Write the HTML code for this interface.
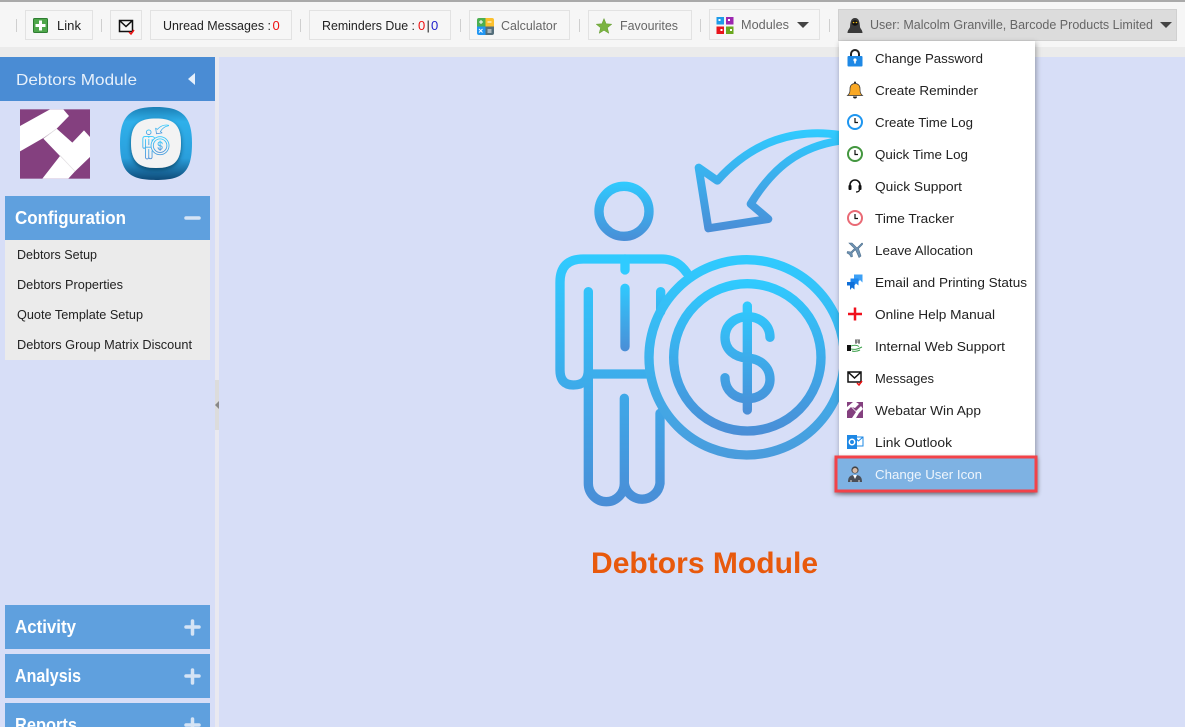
<!DOCTYPE html>
<html lang="en"><head><meta charset="utf-8"><title>Debtors Module</title>
<style>
html,body{margin:0;padding:0;width:1185px;height:727px;overflow:hidden;background:#d7def7}
svg{display:block}
text{font-family:"Liberation Sans",sans-serif;font-size:13px;fill:#222}
.g{fill:#666}
.b{font-weight:bold;fill:#fff;font-size:18px}
.box{fill:#f6f6f6;stroke:#e2e2e2;stroke-width:1}
.sep{stroke:#cfcfcf;stroke-width:1}
.ck{fill:#fff;stroke-width:2}
.hd{stroke:#111;stroke-width:1.2;fill:none}
</style></head><body>
<svg width="1185" height="727" viewBox="0 0 1185 727" xmlns="http://www.w3.org/2000/svg">
<defs>
<linearGradient id="g1" gradientUnits="userSpaceOnUse" x1="0" y1="184" x2="0" y2="364"><stop offset="0" stop-color="#2fcbff"/><stop offset="1" stop-color="#4a8dd6"/></linearGradient>
<linearGradient id="g2" gradientUnits="userSpaceOnUse" x1="0" y1="403" x2="0" y2="1160"><stop offset="0" stop-color="#2fcbff"/><stop offset="1" stop-color="#4a8dd6"/></linearGradient>
<linearGradient id="g3" gradientUnits="userSpaceOnUse" x1="0" y1="403" x2="0" y2="1022"><stop offset="0" stop-color="#2fcbff"/><stop offset="1" stop-color="#4a9bdc"/></linearGradient>
<linearGradient id="g4" gradientUnits="userSpaceOnUse" x1="0" y1="475" x2="0" y2="950"><stop offset="0" stop-color="#2fcbff"/><stop offset="1" stop-color="#4a8dd6"/></linearGradient>
<linearGradient id="g5" gradientUnits="userSpaceOnUse" x1="0" y1="30" x2="0" y2="338"><stop offset="0" stop-color="#2fcbff"/><stop offset="1" stop-color="#4a8dd6"/></linearGradient>
<linearGradient id="g6" gradientUnits="userSpaceOnUse" x1="0" y1="545" x2="0" y2="885"><stop offset="0" stop-color="#2fcbff"/><stop offset="1" stop-color="#4a8dd6"/></linearGradient>
<linearGradient id="g7" gradientUnits="userSpaceOnUse" x1="0" y1="490" x2="0" y2="695"><stop offset="0" stop-color="#2fcbff"/><stop offset="1" stop-color="#4a8dd6"/></linearGradient>
<linearGradient id="ring" x1="0" y1="0" x2="0" y2="1"><stop offset="0" stop-color="#1b7fb5"/><stop offset=".2" stop-color="#2fb0ea"/><stop offset=".7" stop-color="#2a9fdc"/><stop offset="1" stop-color="#0e4a78"/></linearGradient>
<filter id="sh" x="-10%" y="-10%" width="125%" height="120%"><feDropShadow dx="1" dy="2" stdDeviation="3" flood-color="#000" flood-opacity=".35"/></filter>
<filter id="sh2" x="-10%" y="-30%" width="120%" height="170%"><feDropShadow dx="0" dy="2" stdDeviation="2" flood-color="#000" flood-opacity=".4"/></filter>
<filter id="sh3" x="-20%" y="-20%" width="140%" height="140%"><feDropShadow dx="0" dy="2" stdDeviation="2" flood-color="#06324f" flood-opacity=".7"/></filter>
<g id="bigicon" fill="none" stroke-width="28" stroke-linecap="round" stroke-linejoin="round">
<circle cx="252" cy="274" r="75" stroke="url(#g1)"/>
<path stroke="url(#g2)" d="M440 458Q412 417 365 417H130Q60 417 60 487V750Q60 795 100 795Q145 795 145 750V515M145 762H322M145 762V1090A54 55 0 0 0 253 1090V835M253 1090A54 55 0 0 0 360 1090V880"/>
<path stroke="url(#g7)" d="M255 417V450M255 505V680M362 515V575"/>
<circle cx="620" cy="712" r="293" stroke="url(#g3)"/>
<circle cx="622" cy="712" r="221" stroke="url(#g4)"/>
<path stroke="url(#g6)" d="M622 558V870M690 652C690 615 660 590 622 590C585 590 555 615 555 652C555 690 585 712 622 714C660 716 690 740 690 778C690 812 660 836 622 836C585 836 555 812 555 773"/>
<path stroke="url(#g5)" stroke-width="24" d="M900 45C770 25 640 60 532 182L476 143L505 325L685 297L632 252C700 140 780 80 900 62"/>
</g>
</defs>

<!-- background / toolbar -->
<rect width="1185" height="727" fill="#d7def7"/>
<rect width="1185" height="47" fill="#f6f6f6"/>
<rect y="47" width="1185" height="10" fill="#ebebeb"/>
<rect width="1185" height="2" fill="#aaa"/>

<g class="sep">
<line x1="16.5" y1="19" x2="16.5" y2="32"/><line x1="101.5" y1="19" x2="101.5" y2="32"/><line x1="300.5" y1="19" x2="300.5" y2="32"/><line x1="460.5" y1="19" x2="460.5" y2="32"/><line x1="579.5" y1="19" x2="579.5" y2="32"/><line x1="700.5" y1="19" x2="700.5" y2="32"/><line x1="829.5" y1="19" x2="829.5" y2="32"/>
</g>
<rect class="box" x="25.5" y="10.5" width="67" height="29"/>
<rect class="box" x="110.5" y="10.5" width="31" height="29"/>
<rect class="box" x="150.5" y="10.5" width="141" height="29"/>
<rect class="box" x="309.5" y="10.5" width="141" height="29"/>
<rect class="box" x="469.5" y="10.5" width="100" height="29"/>
<rect class="box" x="588.5" y="10.5" width="103" height="29"/>
<rect class="box" x="709.5" y="9.5" width="110" height="30"/>
<rect x="838.5" y="9.5" width="338" height="31" fill="#dcdcdc" stroke="#d0d0d0"/>

<!-- toolbar icons -->
<rect x="33.5" y="18.5" width="14" height="14" rx="1" fill="#4ea64a" stroke="#2e7d32"/>
<path d="M40.5 20.5v10M35.5 25.5h10" stroke="#fff" stroke-width="3"/>
<path d="M119.500 20.500h13v11h-13zM119.500 20.500l6.500 6 6.500-6" fill="none" stroke="#111" stroke-width="1.500"/>
<path d="M129 32l2 2 3-4" fill="none" stroke="#e11" stroke-width="1.500"/>
<g>
<path d="M477 20a2 2 0 0 1 2-2h6.500v8.500H477z" fill="#4caf50"/><path d="M485.500 18H492a2 2 0 0 1 2 2v6.500h-8.500z" fill="#fbc02d"/>
<path d="M477 26.500h8.500V35H479a2 2 0 0 1-2-2z" fill="#2196f3"/><path d="M485.500 26.500H494V33a2 2 0 0 1-2 2h-6.500z" fill="#546e7a"/>
<path d="M479 22h4M481 20v4M487.500 22h4M487.500 30h4M487.500 32h4M479 29l3.500 3.500M482.500 29L479 32.500" stroke="#fff" stroke-width="1"/>
</g>
<path d="M604 18.500l2.100 5.300 5.700.4-4.400 3.600 1.400 5.500-4.800-3-4.800 3 1.400-5.500-4.400-3.600 5.700-.4z" fill="#7cb342" stroke="#5f9a2c" stroke-width=".5"/>
<g>
<rect x="716.500" y="17" width="7.500" height="7.500" fill="#1e9be8"/><rect x="726" y="17" width="7.500" height="7.500" fill="#9c27b0"/>
<rect x="716.500" y="26.500" width="7.500" height="7.500" fill="#e8141c"/><rect x="726" y="26.500" width="7.500" height="7.500" fill="#6aa81e"/>
<path d="M718.500 19h2v2h-2zM728 19h2v2h-2zM720.500 29h2v2h-2zM730 29h2v2h-2z" fill="#fff"/>
</g>
<path d="M797 22h12l-6 6z" fill="#444"/>
<path d="M1160 22h12l-6 6z" fill="#444"/>
<path d="M847.500 33c0-3 2-4 2.500-6c.300-5 1-9 5-9s4.700 4 5 9c.5 2 2.500 3 2.500 6z" fill="#3a3a3a"/>
<ellipse cx="855" cy="23" rx="3.200" ry="2.700" fill="#111"/><path d="M852.800 22.500h1.500M855.700 22.500h1.500" stroke="#f6c21b" stroke-width="1.300"/>

<!-- toolbar text -->
<text x="57" y="30" textLength="24" lengthAdjust="spacingAndGlyphs">Link</text>
<text x="163" y="30" textLength="108" lengthAdjust="spacingAndGlyphs">Unread Messages :</text>
<text x="272.500" y="30" style="fill:#e11">0</text>
<text x="322" y="30" textLength="93" lengthAdjust="spacingAndGlyphs">Reminders Due :</text>
<text x="418" y="30" style="fill:#e11">0</text><text x="426.500" y="30">|</text><text x="431" y="30" style="fill:#22c">0</text>
<text class="g" x="501" y="30" textLength="56" lengthAdjust="spacingAndGlyphs">Calculator</text>
<text class="g" x="620" y="30" textLength="58" lengthAdjust="spacingAndGlyphs">Favourites</text>
<text class="g" x="741" y="29" textLength="48" lengthAdjust="spacingAndGlyphs">Modules</text>
<text class="g" x="870" y="29" textLength="283" lengthAdjust="spacingAndGlyphs">User: Malcolm Granville, Barcode Products Limited</text>

<!-- sidebar -->
<rect y="57" width="215" height="44" fill="#4a8cd4"/>
<rect x="215" y="57" width="4" height="670" fill="#e9e9f0"/>
<rect x="215" y="380" width="4" height="50" fill="#dcdcdc"/>
<path d="M219 401v8l-4-4z" fill="#888"/>
<text x="16" y="85" style="font-size:16px;fill:#e6f0fb" textLength="121" lengthAdjust="spacingAndGlyphs">Debtors Module</text>
<path d="M195 73v12l-7-6z" fill="#e6f0fb"/>

<!-- logos -->
<g transform="translate(15 102) scale(.33333)">
<rect x="15" y="22" width="210" height="208" fill="#84407f"/>
<path d="M15 72L105 22H145L162 42L125 80L85 108L15 148z" fill="#fff"/>
<path d="M85 110L125 80L172 122L207 85L225 105V165L180 208L135 162z" fill="#fff"/>
<path d="M82 230L135 162L180 208L160 230z" fill="#fff"/>
<path d="M88 108L125 80" stroke="#ddd" stroke-width="2"/><path d="M135 160L180 208" stroke="#e4e4e4" stroke-width="2"/>
</g>
<path d="M156 107c25 0 36 8 36 36c0 30-10 37-36 37c-26 0-36-7-36-37c0-28 11-36 36-36z" fill="url(#ring)"/>
<path d="M156 118.500c17 0 25 6 25 24.500c0 19-8 25-25 25c-17 0-25-6-25-25c0-18.500 8-24.500 25-24.500z" fill="#f3f3f3" filter="url(#sh3)"/>
<use href="#bigicon" transform="translate(141 123.800) scale(.0307)"/>

<!-- accordion -->
<rect x="5" y="196" width="205" height="44" fill="#5fa0de"/>
<rect x="5" y="240" width="205" height="120" fill="#ebebeb"/>
<rect x="5" y="605" width="205" height="44" fill="#5fa0de"/>
<rect x="5" y="654" width="205" height="44" fill="#5fa0de"/>
<rect x="5" y="703" width="205" height="24" fill="#5fa0de"/>
<text class="b" x="15" y="224" textLength="111" lengthAdjust="spacingAndGlyphs">Configuration</text>
<text class="b" x="15" y="633" textLength="61" lengthAdjust="spacingAndGlyphs">Activity</text>
<text class="b" x="15" y="682" textLength="66" lengthAdjust="spacingAndGlyphs">Analysis</text>
<text class="b" x="15" y="731" textLength="62" lengthAdjust="spacingAndGlyphs">Reports</text>
<g stroke="#d5e4f5" stroke-width="3.500" stroke-linecap="round">
<path d="M186 218h13"/><path d="M186 627h13M192.500 621v13M186 676h13M192.500 670v13M186 725h13M192.500 719v9"/>
</g>
<text x="17" y="259" textLength="80" lengthAdjust="spacingAndGlyphs">Debtors Setup</text>
<text x="17" y="289" textLength="106" lengthAdjust="spacingAndGlyphs">Debtors Properties</text>
<text x="17" y="319" textLength="126" lengthAdjust="spacingAndGlyphs">Quote Template Setup</text>
<text x="17" y="349" textLength="175" lengthAdjust="spacingAndGlyphs">Debtors Group Matrix Discount</text>

<!-- main -->
<use href="#bigicon" transform="translate(540 120) scale(.33333)"/>
<text x="591" y="573" style="font-size:30px;font-weight:bold;fill:#e8590c" textLength="227">Debtors Module</text>

<!-- dropdown -->
<rect x="839" y="41" width="196" height="449" fill="#fff" filter="url(#sh)"/>
<rect x="836" y="457" width="200" height="34" fill="#7eb2e3" stroke="#f2434a" stroke-width="3" filter="url(#sh2)"/>

<g>
<text x="875" y="63" textLength="108" lengthAdjust="spacingAndGlyphs">Change Password</text>
<text x="875" y="95" textLength="103" lengthAdjust="spacingAndGlyphs">Create Reminder</text>
<text x="875" y="127" textLength="98" lengthAdjust="spacingAndGlyphs">Create Time Log</text>
<text x="875" y="159" textLength="93" lengthAdjust="spacingAndGlyphs">Quick Time Log</text>
<text x="875" y="191" textLength="87" lengthAdjust="spacingAndGlyphs">Quick Support</text>
<text x="875" y="223" textLength="79" lengthAdjust="spacingAndGlyphs">Time Tracker</text>
<text x="875" y="255" textLength="98" lengthAdjust="spacingAndGlyphs">Leave Allocation</text>
<text x="875" y="287" textLength="152" lengthAdjust="spacingAndGlyphs">Email and Printing Status</text>
<text x="875" y="319" textLength="120" lengthAdjust="spacingAndGlyphs">Online Help Manual</text>
<text x="875" y="351" textLength="130" lengthAdjust="spacingAndGlyphs">Internal Web Support</text>
<text x="875" y="383" textLength="59" lengthAdjust="spacingAndGlyphs">Messages</text>
<text x="875" y="415" textLength="106" lengthAdjust="spacingAndGlyphs">Webatar Win App</text>
<text x="875" y="447" textLength="77" lengthAdjust="spacingAndGlyphs">Link Outlook</text>
<text x="875" y="479" style="fill:#eef5fc" textLength="107" lengthAdjust="spacingAndGlyphs">Change User Icon</text>
</g>

<!-- menu icons -->
<g transform="translate(855 58)"><path d="M-4-1V-4a4 4 0 0 1 8 0V-1" fill="none" stroke="#222" stroke-width="2"/><rect x="-7.500" y="-2" width="15" height="10.500" rx="1" fill="#1e88e5"/><circle cy="2" r="1.600" fill="#fff"/><path d="M0 2v3.500" stroke="#fff" stroke-width="1.500"/></g>
<g transform="translate(855 90)"><path d="M-7.500 5.500c2.500-2 2.500-4 2.500-7c0-3 2-5 5-5s5 2 5 5c0 3 0 5 2.500 7z" fill="#f9a825" stroke="#333" stroke-width=".7"/><path d="M-2 6.500a2 2 0 0 0 4 0z" fill="#222"/><circle cy="-7.500" r="1" fill="#222"/></g>
<g transform="translate(855 122)"><circle r="7" class="ck" stroke="#1e96f0"/><path class="hd" d="M0-4V0.500H3"/></g>
<g transform="translate(855 154)"><circle r="7" class="ck" stroke="#43963f"/><path class="hd" d="M0-4V0.500H3"/></g>
<g transform="translate(855 186)"><path d="M-5 2V-1a5 5 0 0 1 10 0V2" fill="none" stroke="#111" stroke-width="1.600"/><rect x="-6.500" y="-1" width="3" height="5" rx="1" fill="#111"/><rect x="3.500" y="-1" width="3" height="5" rx="1" fill="#111"/><path d="M4.500 4c-.5 1.500-2 2-3.500 2" fill="none" stroke="#111" stroke-width="1.200"/></g>
<g transform="translate(855 218)"><circle r="7" class="ck" stroke="#e96a75"/><path class="hd" d="M0-4V0.500H3"/></g>
<g transform="translate(855 250)"><path d="M-6-7L-3-7L2-2L6-6C7-7.500 8-7 7.500-5.500L3.500-1.500L6 6L4 7.500L0.500-.5L-3 3L-2.500 6.500L-4 7L-5.500 4.500L-8 3L-7.500 1.500L-4 2L-.5-1.500z" fill="#6f93b3" stroke="#4d6f8d" stroke-width=".6"/></g>
<g transform="translate(855 282)"><path d="M-1-7.500H7.500V0.500L5-2L2 1V-3.500H-1z" fill="#3da0f5"/><path d="M-4.500-3.500H3.500V3.500L1 1.500L-1.500 4.500V0H-4.500z" fill="#1c86ee"/><path d="M-8 0H-.5V7.500L-3 5.500L-5 8V3.500H-8z" fill="#0f6fd8"/></g>
<path d="M848 314h14M855 307.500v13" stroke="#f0101c" stroke-width="2.500"/>
<g transform="translate(855 346)"><rect x="-8" y="-1" width="4" height="6" fill="#111"/><path d="M-4 0c3-1 6-1 8 .5M-4 3c4 1 7 0 11-2M-3 5c3 1 6 0 8-1" fill="none" stroke="#3fa34d" stroke-width="1"/><path d="M1-6v4M4-6v4M0-4h5M0-6h5" stroke="#333" stroke-width=".8"/></g>
<g transform="translate(855 378)"><path d="M-7-6H6V4H-7zM-7-6L-.5 0L6-6" fill="none" stroke="#111" stroke-width="1.500"/><path d="M2 5l2 2 3-4" fill="none" stroke="#e11" stroke-width="1.500"/></g>
<g transform="translate(855 410)" fill="#84407f"><path d="M-8-8H-2L-8-3zM0-2L4-6L1-8H8V-1L6-4L1 1L-3-3zM-8 1L-4-3L1 2L-3 8H-8zM4 3L8-1V8H1z"/></g>
<g transform="translate(855 442)"><rect x="-1" y="-5" width="9" height="9" fill="#fff" stroke="#1e88e5"/><path d="M-1-5l4.500 4L8-5" fill="none" stroke="#1e88e5"/><path d="M-8-7H2V7H-8z" fill="#1e88e5"/><circle cx="-3" r="2.700" fill="none" stroke="#fff" stroke-width="1.500"/></g>
<g transform="translate(855 474)"><circle cy="-4" r="3.600" fill="#444"/><circle cy="-3.500" r="2.500" fill="#d6b9a5"/><path d="M-7 8c0-5 2-7 7-7s7 2 7 7z" fill="#4a4f58"/><path d="M-2 1L0 5L2 1z" fill="#fff"/><path d="M-5 7h2M3 7h2" stroke="#ddd"/></g>
</svg>
</body></html>
